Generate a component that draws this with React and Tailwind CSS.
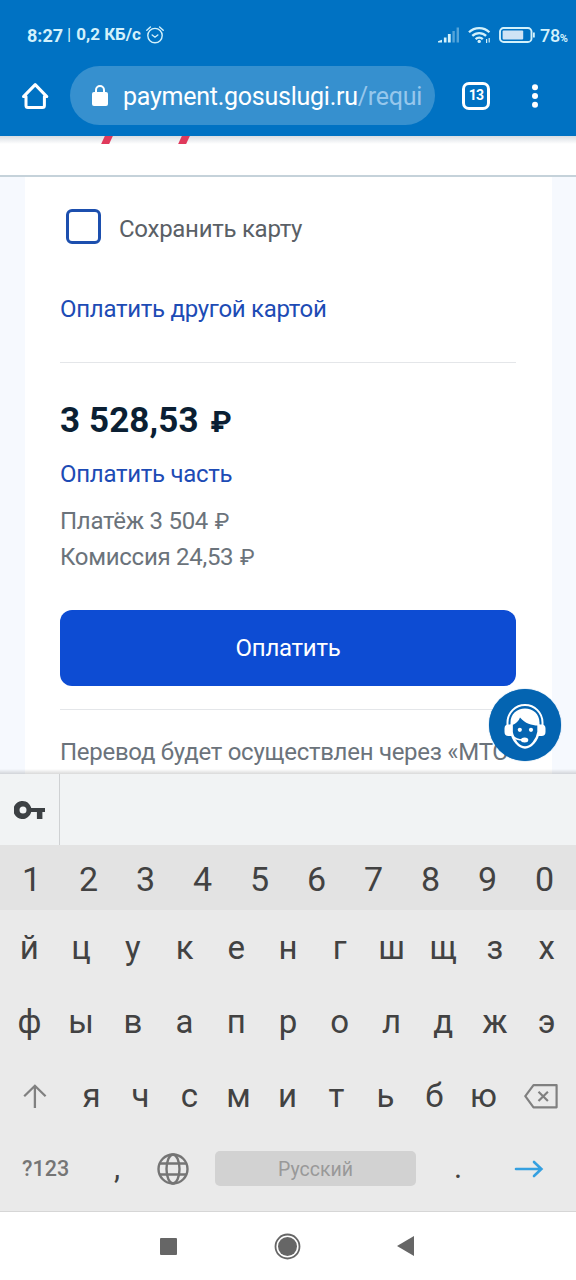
import React, { useState } from 'react';

const DIGITS = ['1', '2', '3', '4', '5', '6', '7', '8', '9', '0'];
const ROW_TOP = ['й', 'ц', 'у', 'к', 'е', 'н', 'г', 'ш', 'щ', 'з', 'х'];
const ROW_MIDDLE = ['ф', 'ы', 'в', 'а', 'п', 'р', 'о', 'л', 'д', 'ж', 'э'];
const ROW_BOTTOM = ['я', 'ч', 'с', 'м', 'и', 'т', 'ь', 'б', 'ю'];

function StatusBar() {
  return (
    <div className="h-[66px] pt-1 pl-[27px] pr-[8px] flex items-center justify-between text-[#d3f1fb]">
      <div className="flex items-center">
        <span className="text-[18px] font-bold">8:27</span>
        <span className="text-[17px] ml-[4px] mr-[5px]">|</span>
        <span className="text-[17px] font-bold">0,2 КБ/с</span>
        <svg width="18" height="18" viewBox="0 0 18 18" fill="none" stroke="currentColor" strokeWidth="1.4" strokeLinecap="round" className="ml-[5px]">
          <circle cx="9" cy="9.6" r="7.2" />
          <path d="M0.8 4.2 4.4 1M17.2 4.2 13.6 1M6.2 9 9 11.2 11.8 9" />
        </svg>
      </div>
      <div className="flex items-center">
        <svg width="22" height="16" viewBox="0 0 22 16" fill="currentColor">
          <path d="M0 15.5V14.2L4 12.8V15.5Z" />
          <rect x="5.9" y="10.5" width="2.6" height="5" />
          <rect x="9.9" y="7" width="2.8" height="8.5" />
          <rect x="14.4" y="4" width="2.4" height="11.5" opacity="0.4" />
          <rect x="18.6" y="0.5" width="2.4" height="15" opacity="0.4" />
        </svg>
        <svg width="23" height="18" viewBox="0 0 23 18" fill="none" stroke="currentColor" strokeWidth="2.3" className="ml-2">
          <path d="M1 6.3a14.6 14.6 0 0 1 20.4 0M4.3 9.9a9.8 9.8 0 0 1 13.8 0M7.6 13.2a5.2 5.2 0 0 1 7.2 0" />
          <circle cx="11.2" cy="15.4" r="1.7" fill="currentColor" stroke="none" />
          <path d="M18.6 13v4M21.2 12v4.6" strokeWidth="1.2" />
        </svg>
        <svg width="36" height="16" viewBox="0 0 36 16" fill="none" className="ml-[8px]">
          <rect x="1" y="1" width="31.5" height="14" rx="3.6" stroke="currentColor" strokeWidth="1.9" />
          <rect x="3.6" y="3.6" width="20.6" height="8.8" rx="1" fill="#cfe3f5" />
          <path d="M34.9 5.5v5" stroke="currentColor" strokeWidth="1.8" />
        </svg>
        <div className="flex items-baseline ml-[5px]">
          <span className="text-[18px] font-medium tracking-[-0.3px]">78</span>
          <span className="text-[11px] font-bold">%</span>
        </div>
      </div>
    </div>
  );
}

function BrowserBar() {
  return (
    <div className="h-[59px] flex items-center text-white">
      <svg width="28" height="28" viewBox="0 0 28 28" fill="none" stroke="currentColor" strokeWidth="3" strokeLinejoin="round" strokeLinecap="round" className="ml-[21px] shrink-0">
        <path d="M2.5 14.6 14.2 2.6 25.8 14.6H23.4V23.6a2 2 0 0 1-2 2H7a2 2 0 0 1-2-2V14.6Z" />
      </svg>
      <div className="ml-[21px] w-[365px] h-[59px] rounded-full bg-[#3690cf] flex items-center pl-[22px] shrink-0">
        <svg width="16" height="21" viewBox="0 0 16 21" className="shrink-0 mb-px">
          <rect x="0" y="7" width="16" height="14" rx="2" fill="currentColor" />
          <path d="M4 8V5a4 4 0 0 1 8 0v3" fill="none" stroke="currentColor" strokeWidth="2" />
        </svg>
        <div className="ml-[15px] whitespace-nowrap text-[25px] tracking-[-0.25px] leading-[34px] pt-[2px]">
          payment.gosuslugi.ru<span className="text-[#96c7ec]">/requi</span>
        </div>
      </div>
      <div className="ml-[27px] size-[28px] rounded-[7px] border-3 border-white flex items-center justify-center text-[14px] font-bold tracking-[-0.8px] shrink-0">13</div>
      <svg width="6" height="24" viewBox="0 0 6 24" fill="currentColor" className="ml-[42px] shrink-0">
        <circle cx="3" cy="3.2" r="3" />
        <circle cx="3" cy="12" r="3" />
        <circle cx="3" cy="20.8" r="3" />
      </svg>
    </div>
  );
}

function SupportButton() {
  return (
    <button className="absolute left-[489px] top-[512px] size-[72px] rounded-full bg-[#0464b1] shadow-[0_0_1px_#0464b1] flex items-center justify-center">
      <svg width="42" height="46" viewBox="0 0 42 46" fill="none" className="mt-[4px]">
        <path d="M3.5 21v-2.500a17.500 17.500 0 0 1 35 0V21" stroke="white" strokeWidth="2" />
        <path d="M6.500 18.500C6.500 10 13 4.500 21 4.500S35.500 10 35.500 18.500v3c-6.500.4-14-1.600-19.500-8-1.200 3.500-4 6-7.500 7.500V31L6.500 30Z" fill="white" />
        <path d="M7.500 20.500v7.500C8.600 36 15 43.500 21 43.500S33.400 36 34.500 28v-7.500" stroke="white" strokeWidth="2.400" />
        <path d="M7.500 20.500H4.500A4 4 0 0 0 .5 24.5v3.500a4 4 0 0 0 4 4H8ZM34.500 20.500h3a4 4 0 0 1 4 4V28a4 4 0 0 1-4 4H34Z" fill="white" />
        <circle cx="15.8" cy="25.8" r="2.1" fill="white" />
        <circle cx="27" cy="25.8" r="2.1" fill="white" />
        <path d="M8.500 31.5c2.500 3.200 6 4.600 10.500 4.600" stroke="white" strokeWidth="1.5" />
        <ellipse cx="20.6" cy="36" rx="3.7" ry="2.5" fill="white" />
      </svg>
    </button>
  );
}

function PaymentPage() {
  const [saveCard, setSaveCard] = useState(false);

  return (
    <div className="relative h-[597px] overflow-hidden bg-[#f6f9fe] pl-[25px] pr-[24px]">
      <div className="h-full bg-white pl-[35px] pr-[36px] text-[24px] leading-[36px] tracking-[-0.28px] whitespace-nowrap text-[#6b737b]">
        <div className="pt-[32px] pl-[6px] flex items-start">
          <button onClick={() => setSaveCard(!saveCard)} className={`size-[35px] rounded-[6px] border-3 border-[#1c4fae] ${saveCard ? 'bg-[#1c4fae]' : 'bg-white'}`} />
          <span className="ml-[18px] mt-[2px] text-[#5a6066]">Сохранить карту</span>
        </div>
        <div className="mt-[44px] text-[#1d4bb5]">Оплатить другой картой</div>
        <div className="mt-[35px] h-px bg-[#e4e6e9]" />
        <div className="mt-[40px] h-[36px] text-[35px] font-bold tracking-[0.1px] text-[#0b1f33]">
          3 528,53 <span className="text-[30px] leading-none ml-[3px]">₽</span>
        </div>
        <div className="mt-[17px] text-[#1d4bb5]">Оплатить часть</div>
        <div className="mt-[11px] h-[36px]">Платёж 3 504 <span className="text-[22px] leading-none ml-px">₽</span></div>
        <div className="h-[36px]">Комиссия 24,53 <span className="text-[22px] leading-none ml-px">₽</span></div>
        <button className="mt-[35px] w-full h-[76px] rounded-[12px] bg-[#0d4cd3] text-white flex items-center justify-center">Оплатить</button>
        <div className="mt-[23px] h-px bg-[#e4e6e9]" />
        <div className="mt-[24px]">Перевод будет осуществлен через «МТС</div>
      </div>
      <SupportButton />
      <div className="absolute inset-x-0 bottom-0 h-[5px] bg-linear-to-b from-transparent to-black/15" />
    </div>
  );
}

function KeyRow({ keys, className }) {
  return (
    <div className={`flex items-center leading-none ${className}`}>
      {keys.map((key) => (
        <div key={key} className="flex-1 text-center">{key}</div>
      ))}
    </div>
  );
}

function Keyboard() {
  return (
    <div className="h-[367px] shrink-0 bg-[#eaeaea] text-[#424242] border-b border-[#d6d6d6]">
      <KeyRow keys={DIGITS} className="h-[65px] pt-[3px] pl-[3px] pr-[3px] bg-[#e3e3e3] text-[34px]" />
      <KeyRow keys={ROW_TOP} className="h-[74px] px-[3.5px] text-[33px]" />
      <KeyRow keys={ROW_MIDDLE} className="h-[74px] px-[3.5px] text-[33px]" />
      <div className="h-[74px] flex items-center">
        <svg width="24" height="25" viewBox="0 0 24 25" fill="none" stroke="#808080" strokeWidth="2.3" className="ml-[23px] mt-[3px]">
          <path d="M11.9 24V2M1.2 12.2 11.9 1.8 22.6 12.2" />
        </svg>
        <KeyRow keys={ROW_BOTTOM} className="w-[441px] ml-[20px] h-full text-[33px]" />
        <svg width="34" height="25" viewBox="0 0 34 25" fill="none" stroke="#808080" strokeWidth="2.2" strokeLinejoin="round" className="ml-[16px] mt-[2px]">
          <path d="M9.5 1.2H32.6V23.3H9.5L1.3 12.2ZM14.5 7.8l9.4 9.2M23.9 7.8l-9.4 9.2" />
        </svg>
      </div>
      <div className="h-[73px] flex items-center">
        <span className="ml-[22px] mt-[2px] w-[48px] text-[21.5px] text-[#757575] font-medium">?123</span>
        <span className="ml-[44px] w-2 text-[31px]">,</span>
        <svg width="32" height="32" viewBox="0 0 32 32" fill="none" stroke="#757575" strokeWidth="2.4" className="ml-[35px]">
          <circle cx="16" cy="16" r="14.5" />
          <ellipse cx="16" cy="16" rx="6.5" ry="14.5" />
          <path d="M3 10.5h26M3 21.5h26" />
        </svg>
        <div className="ml-[26px] w-[201px] h-[35px] rounded-[5px] bg-[#d2d2d2] text-[#999] text-[19.5px] pt-[2px] flex items-center justify-center">Русский</div>
        <span className="ml-[38px] w-2 text-[31px]">.</span>
        <svg width="30" height="18" viewBox="0 0 30 18" fill="none" stroke="#35a0e0" strokeWidth="2.6" strokeLinecap="round" className="ml-[52px]">
          <path d="M2 9H27M20 2l7.4 7L20 16" />
        </svg>
      </div>
    </div>
  );
}

export default function App() {
  return (
    <main className="w-[576px] h-[1280px] overflow-hidden bg-white flex flex-col font-['Roboto',sans-serif]">
      <header className="h-[136px] bg-[#0072c3] shrink-0">
        <StatusBar />
        <BrowserBar />
      </header>

      {/* Site header, scrolled so only the logo tails are visible */}
      <div className="h-[41px] shrink-0 bg-linear-to-b from-[#d8dde2] to-white to-[8px] border-b-2 border-[#c5d2da] flex items-start pl-[103px]">
        <div className="w-[8px] h-[8px] bg-[#e03a5c] -skew-x-[25deg]" />
        <div className="ml-[69px] w-[8px] h-[8px] bg-[#e03a5c] -skew-x-[25deg]" />
      </div>

      <PaymentPage />

      {/* Password suggestion strip */}
      <div className="h-[71px] shrink-0 bg-[#f1f3f4] flex">
        <div className="w-[60px] border-r border-[#cfd1d3] flex items-center pl-[14px]">
          <svg width="31" height="18" viewBox="0 0 31 18" fill="#3c4043">
            <path fillRule="evenodd" d="M17.2 7H31v4h-2.6v7h-5.5v-7H17.2A9 9 0 1 1 17.2 7ZM9 5.5a3.5 3.5 0 1 0 0 7 3.5 3.5 0 0 0 0-7Z" />
          </svg>
        </div>
      </div>

      <Keyboard />

      <nav className="flex-1 bg-white flex items-center">
        <div className="ml-[160px] size-[17px] rounded-[1px] bg-[#666]" />
        <svg width="27" height="27" viewBox="0 0 27 27" className="ml-[97px]">
          <circle cx="13.5" cy="13.5" r="12" fill="none" stroke="#666" strokeWidth="1.8" />
          <circle cx="13.5" cy="13.5" r="9.5" fill="#666" />
        </svg>
        <svg width="17" height="20" viewBox="0 0 17 20" fill="#666" className="ml-[96px]">
          <path d="M0 10 17 0V20Z" />
        </svg>
      </nav>
    </main>
  );
}
